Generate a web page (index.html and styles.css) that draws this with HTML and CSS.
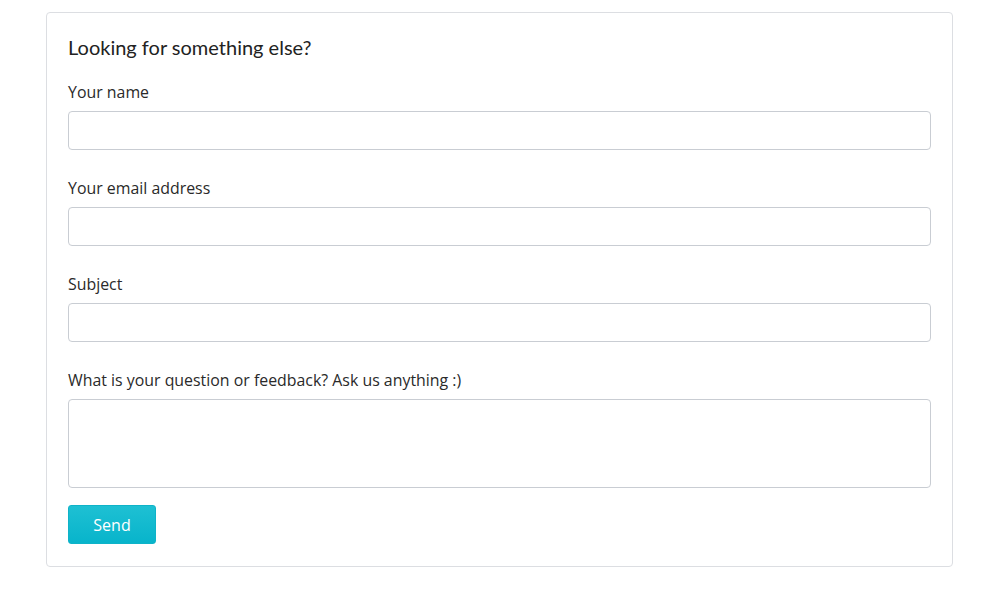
FILE: index.html
```html
<!DOCTYPE html>
<html>
<head>
<meta charset="utf-8">
<link rel="stylesheet" href="styles.css">
</head>
<body>
<div class="page">
  <form class="card">
    <h2 class="title">Looking for something else?</h2>
    <div class="group">
      <label class="label">Your name</label>
      <input class="field" type="text">
    </div>
    <div class="group">
      <label class="label">Your email address</label>
      <input class="field" type="text">
    </div>
    <div class="group">
      <label class="label">Subject</label>
      <input class="field" type="text">
    </div>
    <div class="group last">
      <label class="label">What is your question or feedback? Ask us anything :)</label>
      <textarea class="field area"></textarea>
    </div>
    <button class="send" type="button">Send</button>
  </form>
</div>
</body>
</html>
```
FILE: styles.css
```css
html, body {
  margin: 0;
  padding: 0;
  background: #fff;
}
.page {
  padding: 12px 47px 0 46px;
}
.card {
  display: flex;
  flex-direction: column;
  align-items: flex-start;
  border: 1px solid #dcdee2;
  border-radius: 4px;
  padding: 20px 21px 21px 21px;
  box-sizing: border-box;
  width: 907px;
  height: 555px;
}
.title {
  margin: 0 0 19px 0;
  font-family: Lato, "Liberation Sans", sans-serif;
  font-weight: 400;
  font-size: 20px;
  line-height: 28px;
  color: #222;
}
.group {
  display: flex;
  flex-direction: column;
  width: 100%;
  margin-bottom: 26px;
}
.group.last {
  margin-bottom: 17px;
}
.label {
  font-family: "Open Sans", "Noto Sans", sans-serif;
  font-size: 15.9px;
  line-height: 24px;
  color: #2a2a2a;
  margin-bottom: 7px;
}
.field {
  display: block;
  width: 100%;
  height: 39px;
  box-sizing: border-box;
  border: 1px solid #c9cdd3;
  border-radius: 4px;
  background: #fff;
  margin: 0;
  padding: 6px 12px;
  font-family: "Open Sans", sans-serif;
  font-size: 15px;
}
.area {
  height: 89px;
  resize: none;
}
.send {
  width: 88px;
  height: 39px;
  border: 1px solid #0fb3c8;
  border-radius: 3px;
  background: linear-gradient(#1ec0d3, #08b4cb);
  color: #fff;
  font-family: "Open Sans", "Noto Sans", sans-serif;
  font-size: 16px;
  padding: 0;
}
```
